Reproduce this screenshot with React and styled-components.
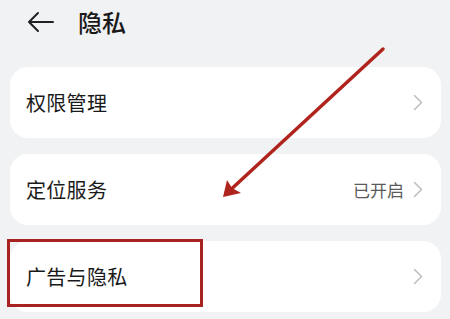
import { styled, createGlobalStyle } from 'styled-components';

const GlobalStyle = createGlobalStyle`
  html, body {
    margin: 0;
    padding: 0;
    background: #f1f2f4;
  }
  body {
    font-family: "Noto Sans CJK SC", "Noto Sans", sans-serif;
  }
`;

const Page = styled.div`
  position: relative;
  width: 450px;
  height: 319px;
  overflow: hidden;
  background: #f1f2f4;
`;

const Header = styled.div`
  height: 44px;
  display: flex;
  align-items: center;
  padding-left: 27px;
`;

const BackIcon = styled.svg`
  width: 28px;
  height: 22px;
  margin-right: 23px;
`;

const Title = styled.div`
  font-size: 24px;
  font-weight: 500;
  color: #1a1a1a;
  line-height: 1;
`;

const List = styled.div`
  display: flex;
  flex-direction: column;
  gap: 16px;
  padding: 23px 9px 0 10px;
`;

const Card = styled.div`
  position: relative;
  height: 71px;
  background: #ffffff;
  border-radius: 18px;
  display: flex;
  align-items: center;
  padding: 0 18px 0 16px;
`;

const Label = styled.div`
  flex: 1;
  font-size: 20px;
  color: #1a1a1a;
  letter-spacing: 0.3px;
`;

const Status = styled.div`
  font-size: 17px;
  color: #5a5a5a;
  margin-right: 9px;
`;

const Chevron = styled.svg`
  width: 10px;
  height: 17px;
`;

const Highlight = styled.div`
  position: absolute;
  left: -3px;
  top: -2px;
  width: 196px;
  height: 68px;
  box-sizing: border-box;
  border: 3.5px solid #a8231f;
`;

const Annotation = styled.svg`
  position: absolute;
  left: 0;
  top: 0;
  width: 450px;
  height: 319px;
  pointer-events: none;
`;

const items = [
  { label: '权限管理' },
  { label: '定位服务', status: '已开启' },
  { label: '广告与隐私', marked: true },
];

function App() {
  return (
    <Page>
      <GlobalStyle />
      <Header>
        <BackIcon viewBox="0 0 28 22">
          <path d="M26 11H2M11 2L2 11l9 9" fill="none" stroke="#222" strokeWidth="2" strokeLinecap="round" strokeLinejoin="round" />
        </BackIcon>
        <Title>隐私</Title>
      </Header>
      <List>
        {items.map((item) => (
          <Card key={item.label}>
            <Label>{item.label}</Label>
            {item.status && <Status>{item.status}</Status>}
            <Chevron viewBox="0 0 10 17">
              <path d="M1.5 1.5l7 7-7 7" fill="none" stroke="#bdbdbd" strokeWidth="1.5" strokeLinecap="round" strokeLinejoin="round" />
            </Chevron>
            {item.marked && <Highlight />}
          </Card>
        ))}
      </List>
      <Annotation viewBox="0 0 450 319">
        <path d="M383 49L226 194" stroke="#b0241e" strokeWidth="3.5" strokeLinecap="round" />
        <path d="M223 197L227 180L232 188L241 193Z" fill="#b0241e" />
      </Annotation>
    </Page>
  );
}

export default App;
